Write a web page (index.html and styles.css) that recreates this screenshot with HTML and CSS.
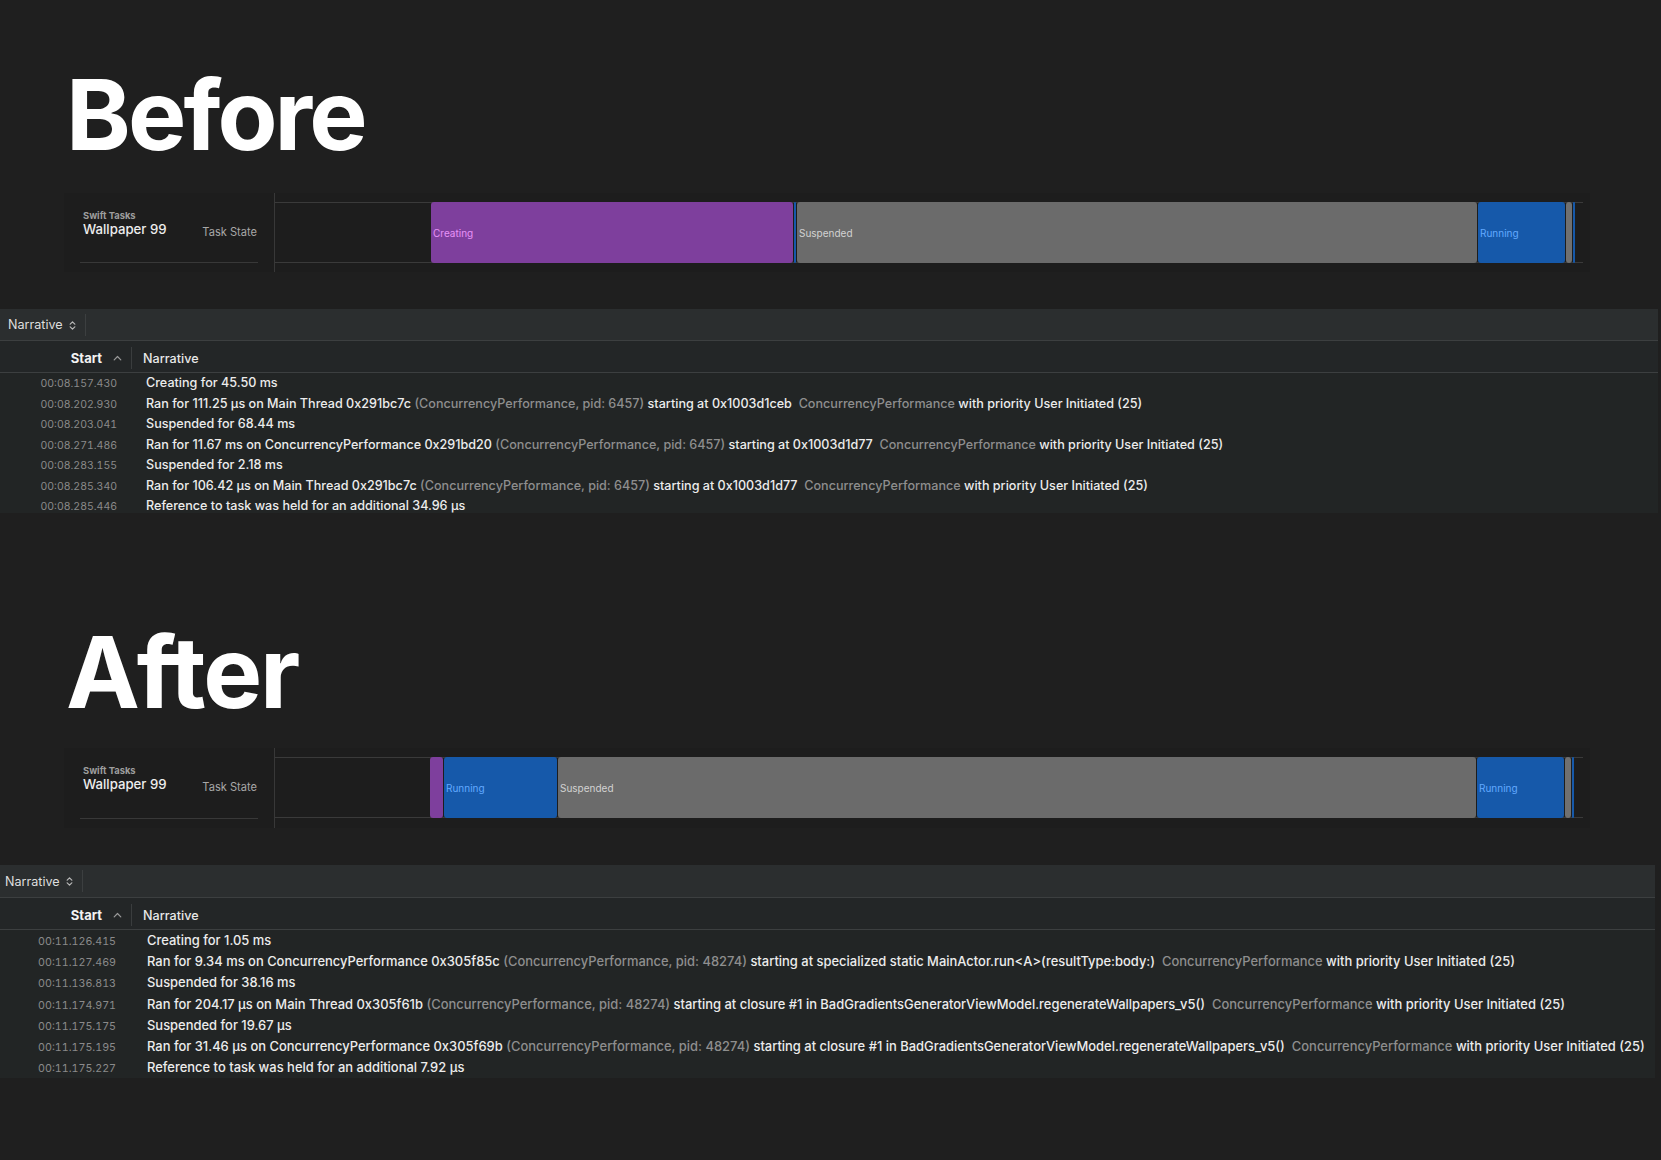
FILE: index.html
```html
<!DOCTYPE html>
<html lang="en">
<head>
<meta charset="utf-8">
<title>Before / After – Swift Tasks</title>
<link rel="stylesheet" href="styles.css">
</head>
<body>
<main class="page">

  <section class="compare compare--before">
    <h1 class="title">Before</h1>
    <div class="track">
      <div class="track-label">
        <div class="track-label-inner">
          <div class="track-names">
            <div class="track-kind">Swift Tasks</div>
            <div class="track-name">Wallpaper 99</div>
          </div>
          <div class="track-sub">Task State</div>
        </div>
      </div>
      <div class="track-lane">
        <div class="lane-bar">
          <div class="seg seg--empty" style="width:156px"></div>
          <div class="seg seg--creating" style="width:362px"><span>Creating</span></div>
          <div class="seg seg--running seg--gap" style="width:1px"></div>
          <div class="seg seg--suspended seg--gap" style="width:680px"><span>Suspended</span></div>
          <div class="seg seg--running seg--gap" style="width:87px"><span>Running</span></div>
          <div class="seg seg--sliver seg--gap" style="width:6px"></div>
          <div class="seg seg--running seg--gap" style="width:2px"></div>
        </div>
      </div>
    </div>

    <div class="panel">
      <div class="panel-toolbar">
        <span class="picker">Narrative
          <svg class="picker-icon" width="7" height="11" viewBox="0 0 7 11"><path d="M1.2 4.2 L3.5 1.8 L5.8 4.2 M1.2 6.8 L3.5 9.2 L5.8 6.8" fill="none" stroke="#b8b8b8" stroke-width="1.2" stroke-linecap="round" stroke-linejoin="round"/></svg>
        </span>
        <span class="tb-sep"></span>
      </div>
      <div class="panel-header">
        <div class="col-start">Start
          <svg class="sort-icon" width="9" height="6" viewBox="0 0 9 6"><path d="M1.2 4.8 L4.5 1.5 L7.8 4.8" fill="none" stroke="#9a9a9a" stroke-width="1.2" stroke-linecap="round" stroke-linejoin="round"/></svg>
        </div>
        <div class="col-narr">Narrative</div>
      </div>
      <div class="rows">
        <div class="row"><span class="ts">00:08.157.430</span><span class="msg">Creating for 45.50 ms</span></div>
        <div class="row"><span class="ts">00:08.202.930</span><span class="msg">Ran for 111.25 µs on Main Thread 0x291bc7c <span class="dim">(ConcurrencyPerformance, pid: 6457)</span> starting at 0x1003d1ceb  <span class="dim">ConcurrencyPerformance</span> with priority User Initiated (25)</span></div>
        <div class="row"><span class="ts">00:08.203.041</span><span class="msg">Suspended for 68.44 ms</span></div>
        <div class="row"><span class="ts">00:08.271.486</span><span class="msg">Ran for 11.67 ms on ConcurrencyPerformance 0x291bd20 <span class="dim">(ConcurrencyPerformance, pid: 6457)</span> starting at 0x1003d1d77  <span class="dim">ConcurrencyPerformance</span> with priority User Initiated (25)</span></div>
        <div class="row"><span class="ts">00:08.283.155</span><span class="msg">Suspended for 2.18 ms</span></div>
        <div class="row"><span class="ts">00:08.285.340</span><span class="msg">Ran for 106.42 µs on Main Thread 0x291bc7c <span class="dim">(ConcurrencyPerformance, pid: 6457)</span> starting at 0x1003d1d77  <span class="dim">ConcurrencyPerformance</span> with priority User Initiated (25)</span></div>
        <div class="row"><span class="ts">00:08.285.446</span><span class="msg">Reference to task was held for an additional 34.96 µs</span></div>
      </div>
    </div>
  </section>

  <section class="compare compare--after">
    <h1 class="title">After</h1>
    <div class="track">
      <div class="track-label">
        <div class="track-label-inner">
          <div class="track-names">
            <div class="track-kind">Swift Tasks</div>
            <div class="track-name">Wallpaper 99</div>
          </div>
          <div class="track-sub">Task State</div>
        </div>
      </div>
      <div class="track-lane">
        <div class="lane-bar">
          <div class="seg seg--empty" style="width:155px"></div>
          <div class="seg seg--creating" style="width:13px"></div>
          <div class="seg seg--running seg--gap" style="width:113px"><span>Running</span></div>
          <div class="seg seg--suspended seg--gap" style="width:918px"><span>Suspended</span></div>
          <div class="seg seg--running seg--gap" style="width:87px"><span>Running</span></div>
          <div class="seg seg--sliver seg--gap" style="width:6px"></div>
          <div class="seg seg--running seg--gap" style="width:2px"></div>
        </div>
      </div>
    </div>

    <div class="panel">
      <div class="panel-toolbar">
        <span class="picker">Narrative
          <svg class="picker-icon" width="7" height="11" viewBox="0 0 7 11"><path d="M1.2 4.2 L3.5 1.8 L5.8 4.2 M1.2 6.8 L3.5 9.2 L5.8 6.8" fill="none" stroke="#b8b8b8" stroke-width="1.2" stroke-linecap="round" stroke-linejoin="round"/></svg>
        </span>
        <span class="tb-sep"></span>
      </div>
      <div class="panel-header">
        <div class="col-start">Start
          <svg class="sort-icon" width="9" height="6" viewBox="0 0 9 6"><path d="M1.2 4.8 L4.5 1.5 L7.8 4.8" fill="none" stroke="#9a9a9a" stroke-width="1.2" stroke-linecap="round" stroke-linejoin="round"/></svg>
        </div>
        <div class="col-narr">Narrative</div>
      </div>
      <div class="rows">
        <div class="row"><span class="ts">00:11.126.415</span><span class="msg">Creating for 1.05 ms</span></div>
        <div class="row"><span class="ts">00:11.127.469</span><span class="msg">Ran for 9.34 ms on ConcurrencyPerformance 0x305f85c <span class="dim">(ConcurrencyPerformance, pid: 48274)</span> starting at specialized static MainActor.run&lt;A&gt;(resultType:body:)  <span class="dim">ConcurrencyPerformance</span> with priority User Initiated (25)</span></div>
        <div class="row"><span class="ts">00:11.136.813</span><span class="msg">Suspended for 38.16 ms</span></div>
        <div class="row"><span class="ts">00:11.174.971</span><span class="msg">Ran for 204.17 µs on Main Thread 0x305f61b <span class="dim">(ConcurrencyPerformance, pid: 48274)</span> starting at closure #1 in BadGradientsGeneratorViewModel.regenerateWallpapers_v5()  <span class="dim">ConcurrencyPerformance</span> with priority User Initiated (25)</span></div>
        <div class="row"><span class="ts">00:11.175.175</span><span class="msg">Suspended for 19.67 µs</span></div>
        <div class="row"><span class="ts">00:11.175.195</span><span class="msg">Ran for 31.46 µs on ConcurrencyPerformance 0x305f69b <span class="dim">(ConcurrencyPerformance, pid: 48274)</span> starting at closure #1 in BadGradientsGeneratorViewModel.regenerateWallpapers_v5()  <span class="dim">ConcurrencyPerformance</span> with priority User Initiated (25)</span></div>
        <div class="row"><span class="ts">00:11.175.227</span><span class="msg">Reference to task was held for an additional 7.92 µs</span></div>
      </div>
    </div>
  </section>

</main>
</body>
</html>
```

FILE: styles.css
```css
* { box-sizing: border-box; }

html, body {
  margin: 0;
  padding: 0;
  background: #1f1f1f;
}

body {
  font-family: Inter, "Noto Sans", "Liberation Sans", sans-serif;
  color: #ececec;
  width: 1661px;
  height: 1160px;
  overflow: hidden;
}

.page {
  display: flex;
  flex-direction: column;
}

.compare--before { padding-top: 66px; }
.compare--after { margin-top: 109.5px; }

/* Big heading */
.title {
  margin: 0;
  padding-left: 66px;
  height: 98px;
  font-size: 98px;
  line-height: 98px;
  font-weight: 700;
  letter-spacing: -2.9px;
  color: #ffffff;
}
.compare--after .title {
  height: 99px;
  font-size: 99px;
  line-height: 99px;
  letter-spacing: -2.2px;
}

/* Track row */
.track {
  display: flex;
  margin-left: 64px;
  width: 1526px;
  height: 79px;
  margin-top: 29px;
  background: #1d1d1d;
}
.compare--after .track {
  margin-top: 26.5px;
  height: 80px;
}

.track-label {
  width: 210px;
  padding: 0 16px;
}
.track-label-inner {
  display: flex;
  height: 70px;
  padding: 18px 1px 0 3px;
  border-bottom: 1px solid #383838;
}
.compare--after .track-label-inner { height: 71px; }

.track-names { display: flex; flex-direction: column; }
.track-kind {
  font-size: 9.4px;
  line-height: 10px;
  font-weight: 700;
  color: #9d9d9d;
}
.track-name {
  font-size: 13.2px;
  line-height: 16px;
  font-weight: 500;
  color: #ededed;
}
.track-sub {
  margin-left: auto;
  margin-top: 14px;
  font-size: 11.1px;
  line-height: 14px;
  color: #a8a8a8;
}

.track-lane {
  flex: 1;
  border-left: 1px solid #383838;
  padding-top: 9px;
}
.lane-bar {
  display: flex;
  width: 1308px;
  height: 61px;
  background:
    linear-gradient(#3a3a3a, #3a3a3a) top / 100% 1px no-repeat,
    linear-gradient(#3a3a3a, #3a3a3a) bottom / 100% 1px no-repeat;
}

.seg {
  flex: none;
  height: 100%;
  display: flex;
  align-items: center;
  padding-left: 2px;
  font-size: 10px;
  border-radius: 3px;
  overflow: hidden;
  white-space: nowrap;
}
.seg--gap { margin-left: 1px; }
.seg--empty { background: transparent; }
.seg--creating { background: #7e3f9d; color: #e792f7; }
.seg--suspended { background: #6b6b6b; color: #d2d2d2; }
.seg--running { background: #1659aa; color: #62a9ff; }
.seg--sliver { background: #707070; }

/* Narrative panel */
.panel {
  margin-top: 37px;
  width: 1658px;
  background: #222525;
}
.compare--after .panel { width: 1655px; }

.panel-toolbar {
  display: flex;
  align-items: center;
  height: 32px;
  padding-left: 8px;
  background: #2b2e2f;
  border-bottom: 1px solid #3c3f40;
}
.compare--after .panel-toolbar {
  height: 33px;
  padding-left: 5px;
}
.picker {
  display: flex;
  align-items: center;
  gap: 6px;
  font-size: 12.6px;
  color: #dedede;
}
.picker-icon { margin-top: 1px; }
.tb-sep {
  width: 1px;
  height: 22px;
  margin-left: 9px;
  background: #3c3f40;
}

.panel-header {
  display: flex;
  align-items: center;
  height: 32px;
  padding-top: 3px;
  background: #232627;
  border-bottom: 1px solid #3c3f40;
}
.col-start {
  width: 132px;
  height: 22px;
  display: flex;
  align-items: center;
  justify-content: flex-end;
  gap: 11px;
  padding-right: 9px;
  border-right: 1px solid #3a3d3e;
  font-size: 13px;
  font-weight: 700;
  color: #f2f2f2;
}
.sort-icon { margin-top: -1px; }
.col-narr {
  padding-left: 11px;
  font-size: 12.6px;
  font-weight: 500;
  color: #e8e8e8;
}

.rows {
  height: 140px;
  overflow: hidden;
}
.compare--after .rows { height: 148px; }

.row {
  display: flex;
  align-items: baseline;
  height: 20.5px;
  line-height: 20.5px;
  white-space: pre;
}
.compare--after .row {
  height: 21.2px;
  line-height: 21.2px;
}

.ts {
  width: 117px;
  flex: none;
  text-align: right;
  font-size: 10.5px;
  font-variant-numeric: tabular-nums;
  color: #8a8a8a;
}
.compare--after .ts {
  width: 116px;
  font-size: 10.7px;
}
.msg {
  margin-left: 29px;
  font-size: 12.6px;
  font-weight: 500;
  color: #ececec;
}
.compare--after .msg {
  margin-left: 31px;
  font-size: 12.95px;
}
.dim { color: #8e8e8e; }
```
